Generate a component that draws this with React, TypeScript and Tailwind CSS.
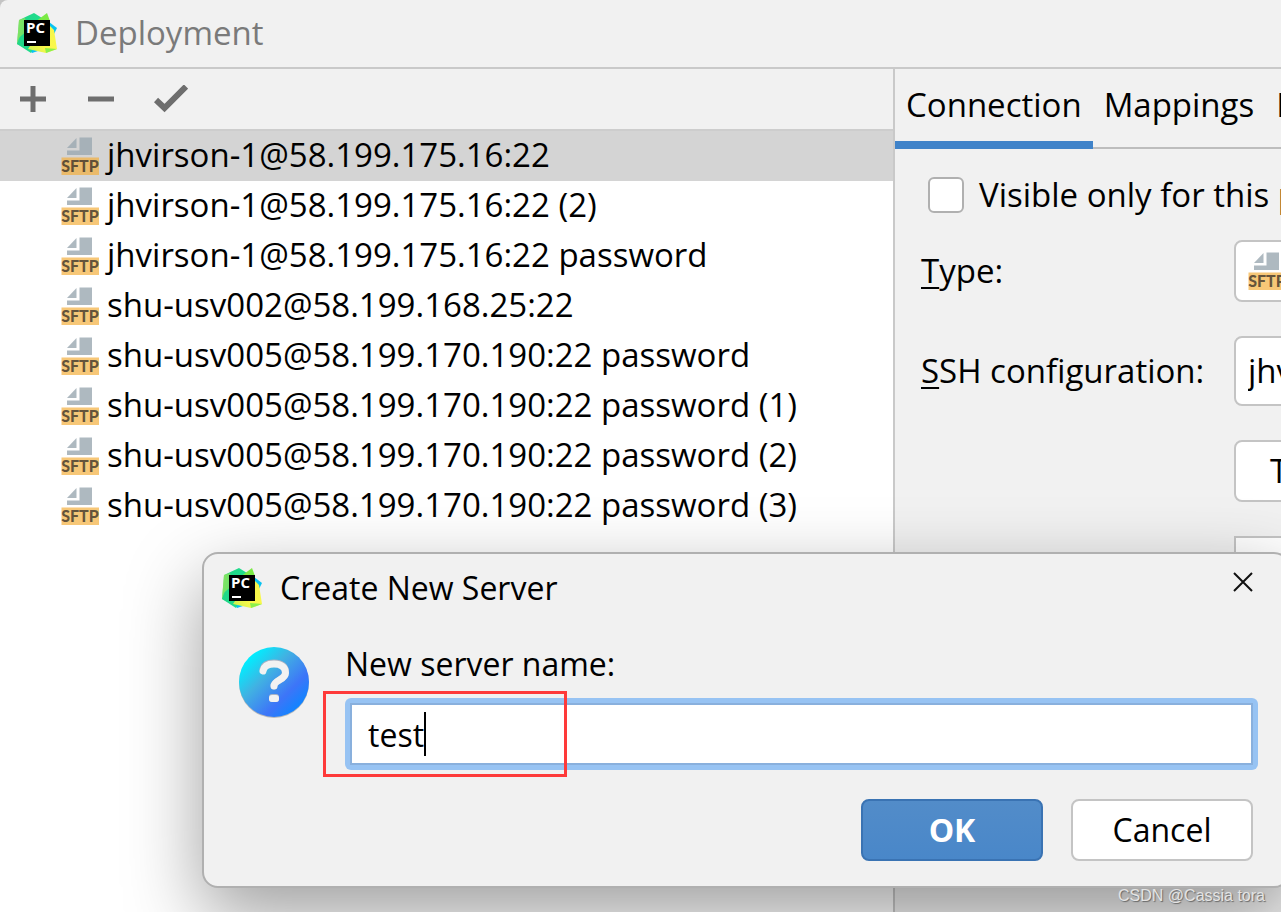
import { useState } from "react";

const SERVERS = [
  "jhvirson-1@58.199.175.16:22",
  "jhvirson-1@58.199.175.16:22 (2)",
  "jhvirson-1@58.199.175.16:22 password",
  "shu-usv002@58.199.168.25:22",
  "shu-usv005@58.199.170.190:22 password",
  "shu-usv005@58.199.170.190:22 password (1)",
  "shu-usv005@58.199.170.190:22 password (2)",
  "shu-usv005@58.199.170.190:22 password (3)",
];

const TABS = ["Connection", "Mappings", "Excluded Paths"];

function PyCharmLogo({ id }: { id: string }) {
  return (
    <svg viewBox="0 0 40 40" className="size-10 shrink-0" aria-hidden="true">
      <defs>
        <linearGradient id={`${id}-green`} x1="0" y1="0.2" x2="1" y2="0.5">
          <stop offset="0" stopColor="#7ee26b" />
          <stop offset="0.3" stopColor="#21d789" />
          <stop offset="1" stopColor="#1fe08f" />
        </linearGradient>
        <linearGradient id={`${id}-yellow`} x1="0" y1="1" x2="1" y2="0">
          <stop offset="0" stopColor="#c5f04f" />
          <stop offset="0.4" stopColor="#fcf84a" />
          <stop offset="1" stopColor="#f3f64b" />
        </linearGradient>
      </defs>
      <path d="M32 9l8 6-4 8-12 14-9 3-8-10z" fill="#07c3f2" />
      <path d="M2 7l15-7 8 5-3 15-8 20L0 31z" fill={`url(#${id}-green)`} />
      <path d="M2 7l6-2 3 12-9 8-2 6z" fill="#8be45e" opacity="0.75" />
      <path d="M3 24l8-7 1 20-12-6z" fill="#21d789" />
      <path d="M18 9L30 0l3 8-4 6z" fill="#7bea45" />
      <path d="M33 13l4 4 3 19-11 4-18-4 8-12z" fill={`url(#${id}-yellow)`} />
      <path d="M29 40l-1-5 12 1z" fill="#8cf04c" />
      <path d="M7 7h26v26H7z" fill="#000" />
      <text x="9" y="20" fill="#fff" fontSize="15" fontWeight="700" fontFamily="Open Sans, sans-serif">
        PC
      </text>
      <path d="M10 28h9v2h-9z" fill="#fff" />
    </svg>
  );
}

function SftpIcon() {
  return (
    <svg viewBox="0 0 38 38" className="size-[38px] shrink-0 overflow-visible" aria-hidden="true">
      <path d="M6 11L15.500 1v10z" fill="#9aa7b0" fillOpacity="0.8" />
      <path d="M18.500 0.500H31V18H6v-4.500h12.500z" fill="#9aa7b0" fillOpacity="0.8" />
      <path d="M0.500 20.500H38V38H0.500z" fill="#f4af3d" fillOpacity="0.7" />
      <text
        x="19"
        y="35"
        textAnchor="middle"
        fill="#231f20"
        fillOpacity="0.7"
        fontSize="16"
        fontWeight="900"
        fontFamily="Lato, sans-serif"
      >
        SFTP
      </text>
    </svg>
  );
}

function QuestionIcon() {
  return (
    <svg viewBox="0 0 70 71" className="h-[71px] w-[70px] shrink-0" aria-hidden="true">
      <defs>
        <linearGradient id="question-fill" x1="0.15" y1="0.15" x2="0.85" y2="0.85">
          <stop offset="0" stopColor="#00eeff" />
          <stop offset="0.35" stopColor="#41b2e2" />
          <stop offset="0.75" stopColor="#3d75f8" />
          <stop offset="1" stopColor="#1284ff" />
        </linearGradient>
      </defs>
      <circle cx="35" cy="36" r="35" fill="#b9b9b9" />
      <circle cx="35" cy="35" r="35" fill="url(#question-fill)" />
      <g fill="none" strokeLinecap="round" strokeLinejoin="round">
        <path d="M24 22c1-4.500 5-6 11-6 7 0 11.500 3 11.500 9 0 8-11.500 8-11.500 14" stroke="#a9b3c4" strokeWidth="7" />
        <path d="M24 24c1-5 5-7 11-7 7 0 11.500 3 11.500 9 0 7-11.500 7-11.500 13" stroke="#f2f2f2" strokeWidth="7" />
      </g>
      <rect x="30" y="47" width="10" height="8" rx="3" fill="#a9b3c4" />
      <rect x="30" y="48" width="10" height="7" rx="3" fill="#f2f2f2" />
    </svg>
  );
}

function CreateServerDialog() {
  const [name, setName] = useState("test");

  return (
    <div
      role="dialog"
      aria-labelledby="dialog-title"
      className="absolute top-[552px] -right-[9px] left-[202px] rounded-2xl border-2 border-[#b0b0b0] bg-[#f1f1f1] pr-[35px] pb-[25px] pl-[18px] text-[32px] shadow-[0_28px_76px_rgba(0,0,0,0.38)]"
    >
      <div className="flex items-start pt-3.5">
        <PyCharmLogo id="dialog-logo" />
        <h2 id="dialog-title" className="ml-[18px] grow leading-10">
          Create New Server
        </h2>
        <button type="button" aria-label="Close" className="mt-1">
          <svg viewBox="0 0 20 20" className="size-5" fill="none" stroke="#111" strokeWidth="2">
            <path d="M1 1l18 18M19 1L1 19" />
          </svg>
        </button>
      </div>

      <div className="mt-9 flex gap-9 pl-[17px]">
        <div className="pt-[3px]">
          <QuestionIcon />
        </div>
        <div className="-mr-[5px] grow">
          <label htmlFor="server-name" className="block leading-10">
            New server name:
          </label>
          {/* Field with focus ring */}
          <div className="relative mt-3.5 rounded-md bg-[#97c3f3] p-[5px]">
            <input
              id="server-name"
              type="text"
              value={name}
              onChange={(e) => setName(e.target.value)}
              className="block h-[62px] w-full border-2 border-[#89b0dd] bg-white px-4 outline-none"
            />
            <span className="absolute top-3.5 left-[79px] h-11 w-0.5 bg-black" />
            <span className="pointer-events-none absolute -top-[7px] -left-[22px] h-[86px] w-[244px] border-3 border-[#fe3a3a]" />
          </div>
        </div>
      </div>

      {/* Actions */}
      <div className="mt-[29px] flex justify-end gap-7">
        <button
          type="button"
          className="h-[62px] w-[182px] rounded-lg border-2 border-[#3a73b3] bg-linear-to-b from-[#528cc9] to-[#4987c9] font-bold text-white"
        >
          OK
        </button>
        <button type="button" className="h-[62px] w-[182px] rounded-lg border-2 border-[#c4c4c4] bg-white">
          Cancel
        </button>
      </div>
    </div>
  );
}

export default function App() {
  const [selected, setSelected] = useState(0);

  return (
    <div className="h-screen bg-[#c4c4c4]">
      <div className="relative flex h-full flex-col overflow-hidden rounded-tl-lg bg-[#f1f1f1] font-['Open_Sans',sans-serif] text-[33px] whitespace-nowrap text-black">
        {/* Title bar */}
        <header className="flex h-[69px] shrink-0 items-center gap-[18px] border-b-2 border-[#c9c9c9] pb-0.5 pl-[17px]">
          <PyCharmLogo id="window-logo" />
          <h1 className="text-[#7a7a7a]">Deployment</h1>
        </header>

        <div className="flex min-h-0 grow">
          {/* Server list */}
          <aside className="flex w-[895px] shrink-0 flex-col border-r-2 border-[#c9c9c9]">
            <div className="flex h-[60px] items-center gap-10 pl-5">
              <button type="button" aria-label="Add">
                <svg viewBox="0 0 26 26" className="size-[26px]" fill="#6e6e6e">
                  <path d="M10.500 0h5v10.500H26v5H15.500V26h-5V15.500H0v-5h10.500z" />
                </svg>
              </button>
              <button type="button" aria-label="Remove">
                <svg viewBox="0 0 28 26" className="h-[26px] w-7" fill="#6e6e6e">
                  <path d="M2 10.500h26v5H2z" />
                </svg>
              </button>
              <button type="button" aria-label="Use as default">
                <svg viewBox="0 0 34 28" className="h-7 w-[34px]" fill="none" stroke="#6e6e6e" strokeWidth="6">
                  <path d="M2 15l8.500 8L32 1.500" />
                </svg>
              </button>
            </div>
            <ul className="grow border-t-2 border-[#cdcdcd] bg-white">
              {SERVERS.map((server, index) => (
                <li key={server}>
                  <button
                    type="button"
                    onClick={() => setSelected(index)}
                    className={`flex h-[50px] w-full items-center gap-2 pl-[61px] text-left ${
                      index === selected ? "bg-[#d4d4d4]" : ""
                    }`}
                  >
                    <SftpIcon />
                    <span className="pb-0.5">{server}</span>
                  </button>
                </li>
              ))}
            </ul>
          </aside>

          {/* Settings */}
          <main className="min-w-0 grow overflow-hidden">
            <nav className="flex h-20 border-b-2 border-[#bdbdbd]">
              {TABS.map((tab, index) => (
                <button
                  key={tab}
                  type="button"
                  className={`h-20 shrink-0 px-[11px] ${
                    index === 0 ? "border-b-8 border-[#4083c9]" : "pb-2"
                  }`}
                >
                  {tab}
                </button>
              ))}
            </nav>

            <label className="mt-[22px] ml-[33px] flex h-12 items-center gap-[15px]">
              <input
                type="checkbox"
                className="size-9 shrink-0 appearance-none rounded-md border-2 border-[#b0b0b0] bg-white"
              />
              Visible only for this project
            </label>

            <form className="mt-[21px] grid grid-cols-[313px_400px] items-center pl-[26px]">
              <label htmlFor="type">
                <u className="decoration-2 underline-offset-4">T</u>ype:
              </label>
              <button
                id="type"
                type="button"
                className="flex h-[62px] items-center rounded-lg border-2 border-[#c4c4c4] bg-white pl-3"
              >
                <SftpIcon />
                <span className="ml-2">SFTP</span>
              </button>

              <label htmlFor="ssh" className="mt-[34px]">
                <u className="decoration-2 underline-offset-4">S</u>SH configuration:
              </label>
              <select
                id="ssh"
                className="mt-[34px] h-[70px] appearance-none rounded-lg border-2 border-[#c4c4c4] bg-white pl-3"
              >
                <option>jhvirson-1@58.199.175.16:22</option>
              </select>

              <button
                type="button"
                className="col-start-2 mt-[34px] h-[62px] rounded-lg border-2 border-[#c4c4c4] bg-white pl-[34px] text-left"
              >
                Test Connection
              </button>

              <label htmlFor="root" className="mt-[34px]">
                Root path:
              </label>
              <input id="root" type="text" className="mt-[34px] h-[70px] border-2 border-[#c4c4c4] bg-white px-3" />
            </form>
          </main>
        </div>

        <CreateServerDialog />

        <p className="absolute right-4 bottom-1 font-['Liberation_Sans',sans-serif] text-base text-[#e4e4e4] [text-shadow:1px_1px_1px_#666]">
          CSDN @Cassia tora
        </p>
      </div>
    </div>
  );
}
